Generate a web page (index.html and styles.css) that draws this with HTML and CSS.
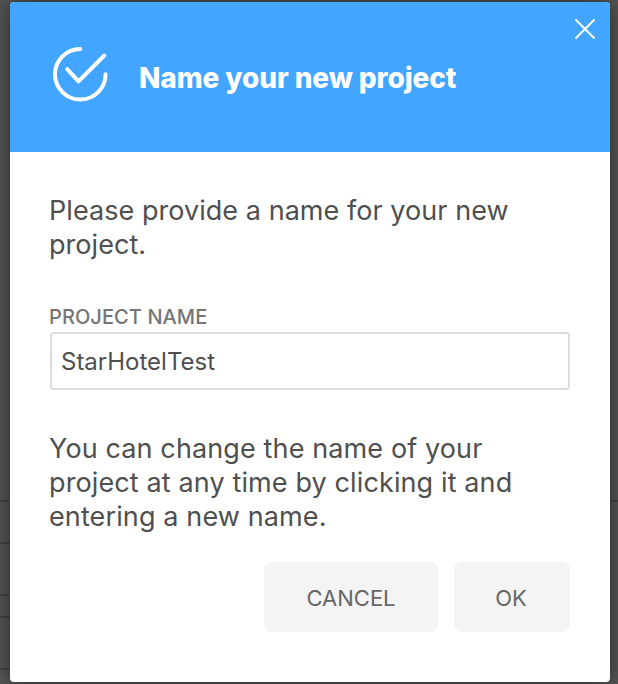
FILE: index.html
```html
<!DOCTYPE html>
<html lang="en">
<head>
<meta charset="utf-8">
<title>Name your new project</title>
<link rel="stylesheet" href="styles.css">
</head>
<body>
<div class="backdrop"></div>
<main class="dialog" role="dialog" aria-labelledby="title">
  <header class="dialog-header">
    <svg class="check-icon" width="60" height="60" viewBox="0 0 60 60" aria-hidden="true">
      <path d="M30.3 5A25.3 25.3 0 1 0 55.6 30.3"/>
      <path d="M17.2 25.2L28.5 37.4L54.3 11.5"/>
    </svg>
    <h1 class="title" id="title">Name your new project</h1>
    <button class="close" aria-label="Close">
      <svg width="24" height="24" viewBox="0 0 24 24"><path d="M2.5 2.5l19 19M21.5 2.5l-19 19"/></svg>
    </button>
  </header>
  <section class="dialog-body">
    <p class="text intro">Please provide a name for your new project.</p>
    <label class="label" for="name">PROJECT NAME</label>
    <input class="input" id="name" type="text" value="StarHotelTest">
    <p class="text note">You can change the name of your project at any time by clicking it and entering a new name.</p>
    <div class="actions">
      <button class="button cancel">CANCEL</button>
      <button class="button ok">OK</button>
    </div>
  </section>
</main>
</body>
</html>
```
FILE: styles.css
```css
* { box-sizing: border-box; }

body {
  margin: 0;
  height: 684px;
  padding: 2px 8px 2px 10px;
  overflow: hidden;
  background: #555;
  font-family: Inter, "Liberation Sans", sans-serif;
}

.backdrop {
  position: absolute;
  inset: 0;
  background:
    linear-gradient(#444, #444) 0 500px / 100% 2px no-repeat,
    linear-gradient(#444, #444) 0 542px / 10px 2px no-repeat,
    linear-gradient(#444, #444) 0 594px / 10px 2px no-repeat,
    linear-gradient(#444, #444) 0 616px / 10px 2px no-repeat,
    linear-gradient(#444, #444) 0 668px / 10px 2px no-repeat;
}

.dialog {
  position: relative;
  width: 600px;
  height: 680px;
  border-radius: 4px;
  background: #fff;
  box-shadow: 0 0 20px rgba(0, 0, 0, .55);
  overflow: hidden;
}

.dialog-header {
  display: flex;
  height: 150px;
  padding: 42px 0 0 40px;
  background: #42a5ff;
  color: #fff;
}

.check-icon {
  flex: none;
  fill: none;
  stroke: #fff;
  stroke-width: 4;
  stroke-linecap: round;
  stroke-linejoin: round;
}

.title {
  margin: 17px 0 0 29px;
  font-size: 28px;
  line-height: 34px;
  font-weight: 800;
  letter-spacing: -.1px;
  white-space: nowrap;
}

.close {
  position: absolute;
  top: 15px;
  right: 13px;
  width: 24px;
  height: 24px;
  padding: 0;
  border: 0;
  background: none;
}

.close svg {
  display: block;
  fill: none;
  stroke: #fff;
  stroke-width: 2;
}

.dialog-body { padding: 42px 40px 0; }

.text {
  margin: 0 0 0 -1px;
  font-size: 27px;
  line-height: 34px;
  color: #4f4f4f;
}

.intro { letter-spacing: .05px; }

.label {
  display: block;
  margin: 43px 0 0 -1px;
  height: 26px;
  font-size: 20px;
  line-height: 24px;
  font-weight: 500;
  letter-spacing: .08px;
  color: #757575;
}

.input {
  display: block;
  width: 520px;
  height: 58px;
  margin: 1px 0 0;
  padding: 0 9px;
  border: 2px solid #dcdcdc;
  border-radius: 4px;
  outline: 0;
  font: 24px/30px Inter, "Liberation Sans", sans-serif;
  color: #4f4f4f;
}

.note {
  margin-top: 42px;
  letter-spacing: .12px;
}

.actions {
  display: flex;
  justify-content: flex-end;
  gap: 16px;
  margin-top: 28px;
}

.button {
  height: 70px;
  padding: 2px 0 0;
  border: 0;
  border-radius: 8px;
  background: #f4f4f4;
  color: #666;
  font: 22px/28px Inter, "Liberation Sans", sans-serif;
}

.cancel { width: 174px; }
.ok { width: 116px; padding-right: 2px; }
```
